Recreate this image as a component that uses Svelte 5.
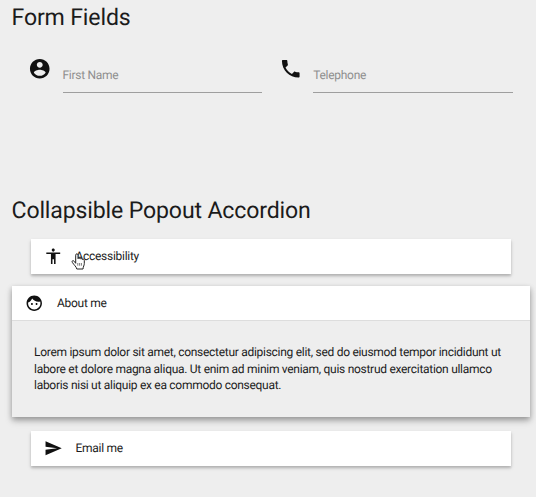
<script>
  const icons = {
    account: 'M12 2C6.48 2 2 6.48 2 12s4.48 10 10 10 10-4.48 10-10S17.52 2 12 2zm0 3c1.66 0 3 1.34 3 3s-1.34 3-3 3-3-1.34-3-3 1.34-3 3-3zm0 14.2c-2.5 0-4.71-1.28-6-3.22.03-1.99 4-3.08 6-3.08 1.99 0 5.97 1.09 6 3.08-1.29 1.94-3.5 3.22-6 3.22z',
    phone: 'M6.62 10.79c1.44 2.83 3.76 5.14 6.59 6.59l2.2-2.2c.27-.27.67-.36 1.02-.24 1.12.37 2.33.57 3.57.57.55 0 1 .45 1 1V20c0 .55-.45 1-1 1-9.39 0-17-7.61-17-17 0-.55.45-1 1-1h3.5c.55 0 1 .45 1 1 0 1.25.2 2.45.57 3.57.11.35.03.74-.25 1.02l-2.2 2.2z',
    accessibility: 'M12 2c1.1 0 2 .9 2 2s-.9 2-2 2-2-.9-2-2 .9-2 2-2zm9 7h-6v13h-2v-6h-2v6H9V9H3V7h18v2z',
    face: 'M9 11.75c-.69 0-1.25.56-1.25 1.25s.56 1.25 1.25 1.25 1.25-.56 1.25-1.25-.56-1.25-1.25-1.25zm6 0c-.69 0-1.25.56-1.25 1.25s.56 1.25 1.25 1.25 1.25-.56 1.25-1.25-.56-1.25-1.25-1.25zM12 2C6.48 2 2 6.48 2 12s4.48 10 10 10 10-4.48 10-10S17.52 2 12 2zm0 18c-4.41 0-8-3.59-8-8 0-.29.02-.58.05-.86 2.36-1.05 4.23-2.98 5.21-5.37C11.07 8.33 14.05 10 17.42 10c.78 0 1.53-.09 2.25-.26.21.71.33 1.47.33 2.26 0 4.41-3.59 8-8 8z',
    send: 'M2.01 21L23 12 2.01 3 2 10l15 2-15 2z'
  };
  const fields = [
    { icon: 'account', label: 'First Name' },
    { icon: 'phone', label: 'Telephone' }
  ];
  const items = [
    { icon: 'accessibility', title: 'Accessibility' },
    {
      icon: 'face',
      title: 'About me',
      body: 'Lorem ipsum dolor sit amet, consectetur adipiscing elit, sed do eiusmod tempor incididunt ut labore et dolore magna aliqua. Ut enim ad minim veniam, quis nostrud exercitation ullamco laboris nisi ut aliquip ex ea commodo consequat.'
    },
    { icon: 'send', title: 'Email me' }
  ];
</script>

{#snippet glyph(name)}
  <svg class="icon" viewBox="0 0 24 24" aria-hidden="true"><path d={icons[name]} /></svg>
{/snippet}

<main>
  <h1>Form Fields</h1>
  <div class="fields">
    {#each fields as f}
      <div class="field">
        {@render glyph(f.icon)}
        <div class="input">{f.label}</div>
      </div>
    {/each}
  </div>

  <h1>Collapsible Popout Accordion</h1>
  <div class="accordion">
    {#each items as item}
      <section class:active={item.body}>
        <header>
          {@render glyph(item.icon)}
          <span>{item.title}</span>
        </header>
        {#if item.body}<p>{item.body}</p>{/if}
      </section>
    {/each}
  </div>

  <svg class="cursor" viewBox="0 0 15 17" aria-hidden="true">
    <path d="M4.7 10.3V2.2c0-1.9 2.3-1.9 2.3 0v3.5c.2-1 2-1 2.2.3.4-.8 1.9-.6 2.1.5.5-.6 2-.4 2 1v3c0 2-1.1 2.8-1.3 5.5H5.8C5.3 13.6 3 12 1.4 9.5.4 7.8 2.1 7 3.2 8.3z" />
    <path d="M6.8 10v2.7M8.6 10v2.7M10.4 10v2.7" />
  </svg>
</main>

<style>
  :global(body) {
    background: #eee;
  }
  main {
    position: relative;
    box-sizing: border-box;
    height: 497px;
    padding: 4px 6px 0 12px;
    overflow: hidden;
    background: #eee;
    color: #1c1c1c;
    font-family: Roboto, sans-serif;
    font-size: 12px;
    letter-spacing: -0.285px;
    text-rendering: geometricPrecision;
  }
  h1 {
    margin: 0 0 0 -0.5px;
    font-size: 23.1px;
    letter-spacing: -0.15px;
    font-weight: 400;
    line-height: 27px;
    color: #1b1b1b;
    white-space: nowrap;
  }
  .icon {
    flex: none;
    fill: #111;
  }
  .fields {
    display: flex;
    gap: 17px;
    height: 166px;
    padding: 26px 17.5px 0 16px;
    box-sizing: border-box;
  }
  .field {
    display: flex;
    flex: 1;
    gap: 11px;
  }
  .field .icon {
    width: 23.5px;
    height: 23.5px;
  }
  .input {
    flex: 1;
    box-sizing: border-box;
    height: 36px;
    border-bottom: 1px solid #9e9e9e;
    color: #8f8f8f;
    line-height: 36px;
  }
  .accordion {
    padding-top: 15px;
  }
  section {
    margin: 0 19px 0 18.5px;
    background: #fff;
    box-shadow: 0 2px 4px rgba(0, 0, 0, 0.15), 0 2px 2px rgba(0, 0, 0, 0.14);
  }
  section.active {
    margin: 12px 0 13.5px;
    background: #eee;
    box-shadow: 0 4px 7px rgba(0, 0, 0, 0.22), 0 2px 5px rgba(0, 0, 0, 0.22);
  }
  header {
    display: flex;
    align-items: center;
    box-sizing: border-box;
    height: 35px;
    gap: 13.5px;
    padding-left: 13px;
    background: #fff;
  }
  header span {
    margin-top: -1px;
  }
  .active header {
    border-bottom: 1px solid #ddd;
  }
  .active header span {
    margin-top: 0;
  }
  header .icon {
    width: 18.5px;
    height: 18.5px;
  }
  p {
    box-sizing: border-box;
    height: 96px;
    margin: 0;
    padding: 23px 20px 0 22px;
    line-height: 16.6px;
  }
  .cursor {
    position: absolute;
    left: 71px;
    top: 253px;
    width: 15px;
    height: 17px;
    fill: #fff;
    stroke: #222;
    stroke-width: 1;
    stroke-linejoin: round;
  }
  .cursor path + path {
    fill: none;
    stroke-width: 0.6;
  }
</style>
